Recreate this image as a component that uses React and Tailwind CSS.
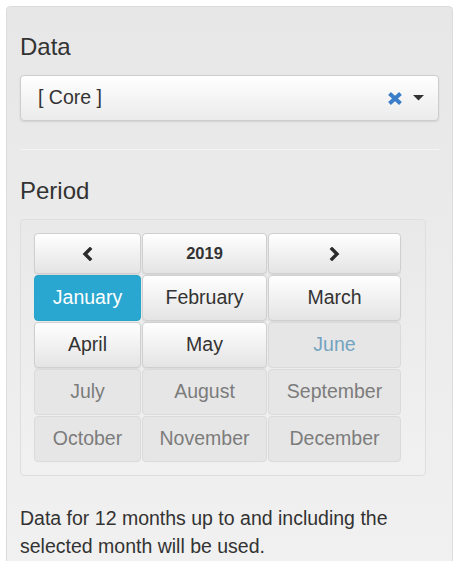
import React from 'react';

const months = [
  { name: 'January', state: 'active' },
  { name: 'February', state: 'on' },
  { name: 'March', state: 'on' },
  { name: 'April', state: 'on' },
  { name: 'May', state: 'on' },
  { name: 'June', state: 'current' },
  { name: 'July', state: 'off' },
  { name: 'August', state: 'off' },
  { name: 'September', state: 'off' },
  { name: 'October', state: 'off' },
  { name: 'November', state: 'off' },
  { name: 'December', state: 'off' },
];

const btnBase = 'flex items-center justify-center rounded-[4px] border';
const btnOn =
  'border-[#cfcfcf] bg-gradient-to-b from-white to-[#e4e4e4] text-[#333] shadow-[0_1px_1px_rgba(0,0,0,0.08)]';

const monthClass = {
  active: 'border-[#28a4c9] bg-[#2aa7d0] text-white',
  on: btnOn,
  current: 'border-[#dadada] bg-[#e6e6e6] text-[#72a3c0]',
  off: 'border-[#dadada] bg-[#e6e6e6] text-[#7c7c7c]',
};

const Chevron = ({ dir }) => (
  <svg width="11" height="14" viewBox="0 0 11 14">
    <polyline
      points={dir === 'left' ? '8,2 3,7 8,12' : '3,2 8,7 3,12'}
      fill="none"
      stroke="#2b2b2b"
      strokeWidth="3.4"
      strokeLinecap="square"
    />
  </svg>
);

const App = () => {
  return (
    <div className="min-h-screen bg-white pt-[6px] px-[6px] font-['Liberation_Sans',Arial,sans-serif] text-[#333]">
      <div className="min-h-[560px] rounded-[4px] border border-[#dcdcdc] bg-gradient-to-b from-[#e7e7e7] to-[#f1f1f1] px-[13px] pt-[27px] pb-6">
        {/* Data */}
        <h3 className="text-[24px] leading-[26px]">Data</h3>
        <div className="mt-[15px] flex h-[46px] items-center rounded-[4px] border border-[#cdcdcd] bg-gradient-to-b from-white to-[#ebebeb] pl-[17px] pr-[14px] shadow-[0_1px_2px_rgba(0,0,0,0.1)]">
          <span className="flex-1 text-[19.5px]">[ Core ]</span>
          <svg width="16" height="15" viewBox="0 0 16 15" className="mr-[10px]">
            <line x1="2.5" y1="2.5" x2="13.5" y2="12.5" stroke="#3a7dc9" strokeWidth="4" />
            <line x1="13.5" y1="2.5" x2="2.5" y2="12.5" stroke="#3a7dc9" strokeWidth="4" />
          </svg>
          <svg width="11" height="6" viewBox="0 0 11 6">
            <polygon points="0,0 11,0 5.5,5.5" fill="#333" />
          </svg>
        </div>

        <hr className="mt-[28px] border-t border-[#f4f4f4]" />

        {/* Period */}
        <h3 className="mt-[28px] text-[24px] leading-[26px]">Period</h3>
        <div className="mt-[15px] w-[406px] rounded-[4px] border border-[#dedede] bg-gradient-to-b from-[#e9e9e9] to-[#f1f1f1] p-[13px]">
          <div className="grid grid-cols-[107px_125px_133px] gap-[1px]">
            <div className={`${btnBase} ${btnOn} h-[41px]`}>
              <Chevron dir="left" />
            </div>
            <div className={`${btnBase} ${btnOn} h-[41px] text-[16.5px] font-bold`}>2019</div>
            <div className={`${btnBase} ${btnOn} h-[41px]`}>
              <Chevron dir="right" />
            </div>
            {months.map((m) => (
              <div key={m.name} className={`${btnBase} ${monthClass[m.state]} h-[46px] text-[19.5px]`}>
                {m.name}
              </div>
            ))}
          </div>
        </div>

        <p className="mt-[28px] text-[19.5px] leading-[28px]">
          Data for 12 months up to and including the selected month will be used.
        </p>
      </div>
    </div>
  );
};

export default App;
